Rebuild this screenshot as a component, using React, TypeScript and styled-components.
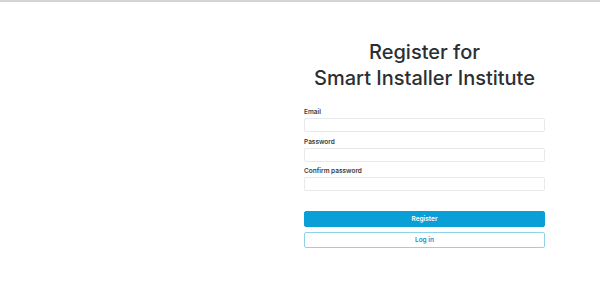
import styled, { createGlobalStyle } from "styled-components";

const GlobalStyle = createGlobalStyle`
  html, body {
    margin: 0;
    padding: 0;
    background: #ffffff;
    font-family: Inter, "Liberation Sans", sans-serif;
  }
  * {
    box-sizing: border-box;
  }
`;

const Page = styled.div`
  width: 600px;
  height: 286px;
  border-top: 2px solid #d4d4d4;
  display: grid;
  grid-template-columns: 304px 241px;
`;

const Side = styled.div``;

const FormColumn = styled.div`
  padding-top: 37px;
  display: flex;
  flex-direction: column;
`;

const Title = styled.h1`
  margin: 0 0 17px;
  text-align: center;
  font-size: 20px;
  line-height: 26px;
  font-weight: 500;
  color: #2b2f33;
`;

const Field = styled.label`
  display: flex;
  flex-direction: column;
  gap: 2px;
  margin-bottom: 5.5px;
`;

const LabelText = styled.span`
  font-size: 6.5px;
  line-height: 8px;
  font-weight: 600;
  color: #3a3d40;
`;

const Input = styled.input`
  height: 14px;
  border: 1px solid #e7e9eb;
  border-radius: 2px;
  background: #fff;
  outline: none;
`;

const Actions = styled.div`
  margin-top: 14px;
  display: flex;
  flex-direction: column;
  gap: 5px;
`;

type ButtonProps = { $primary?: boolean };

const Button = styled.button<ButtonProps>`
  height: 16px;
  border-radius: 2px;
  font-family: Inter, "Liberation Sans", sans-serif;
  font-size: 6.5px;
  font-weight: 600;
  cursor: pointer;
  border: 1px solid ${({ $primary }) => ($primary ? "#0b9fd8" : "#8fd3ea")};
  background: ${({ $primary }) => ($primary ? "#0b9fd8" : "#ffffff")};
  color: ${({ $primary }) => ($primary ? "#ffffff" : "#1592c4")};
`;

const App = () => {
  return (
    <>
      <GlobalStyle />
      <Page>
        <Side />
        <FormColumn>
          <Title>
            Register for
            <br />
            Smart Installer Institute
          </Title>
          <Field>
            <LabelText>Email</LabelText>
            <Input type="email" />
          </Field>
          <Field>
            <LabelText>Password</LabelText>
            <Input type="password" />
          </Field>
          <Field>
            <LabelText>Confirm password</LabelText>
            <Input type="password" />
          </Field>
          <Actions>
            <Button $primary>Register</Button>
            <Button>Log in</Button>
          </Actions>
        </FormColumn>
      </Page>
    </>
  );
};

export default App;
